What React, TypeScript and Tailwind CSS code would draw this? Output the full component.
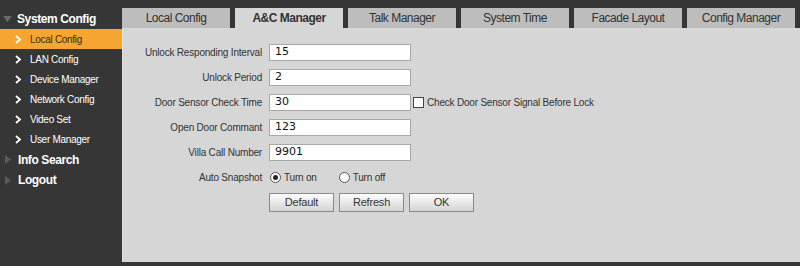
const tabs = ['Local Config', 'A&C Manager', 'Talk Manager', 'System Time', 'Facade Layout', 'Config Manager'];
const subItems = ['Local Config', 'LAN Config', 'Device Manager', 'Network Config', 'Video Set', 'User Manager'];

const fields = [
  { label: 'Unlock Responding Interval', value: '15' },
  { label: 'Unlock Period', value: '2' },
  { label: 'Door Sensor Check Time', value: '30', check: true },
  { label: 'Open Door Commant', value: '123' },
  { label: 'Villa Call Number', value: '9901' },
];

function Chevron() {
  return (
    <svg width="7" height="9" viewBox="0 0 7 9" className="shrink-0">
      <path d="M1 1 L5 4.5 L1 8" stroke="#fff" strokeWidth="1.8" fill="none" />
    </svg>
  );
}

function Triangle({ down }: { down?: boolean }) {
  return (
    <svg width="9" height="9" viewBox="0 0 9 9" className="shrink-0">
      {down ? <path d="M0 2 L9 2 L4.5 8 Z" fill="#6a6a6a" /> : <path d="M2 0 L8 4.5 L2 9 Z" fill="#5a5a5a" />}
    </svg>
  );
}

function Radio({ checked }: { checked?: boolean }) {
  return (
    <span className="w-[11px] h-[11px] rounded-full border border-[#555] bg-white flex items-center justify-center shrink-0">
      {checked && <span className="w-[5px] h-[5px] rounded-full bg-[#222]" />}
    </span>
  );
}

function Btn({ children }: { children: string }) {
  return (
    <button className="w-[65px] h-[19px] border border-[#8a8a8a] bg-gradient-to-b from-[#fdfdfd] to-[#d4d4d4] text-[11px] tracking-[-0.2px] text-[#333] flex items-center justify-center">
      {children}
    </button>
  );
}

export default function App() {
  return (
    <div className="w-[800px] h-[266px] bg-[#363636] flex overflow-hidden" style={{ fontFamily: '"Liberation Sans", Arial, sans-serif' }}>
      <div className="w-[122px] shrink-0 flex flex-col text-white">
        <div className="h-[29px] pt-[8px] flex items-center gap-[5px] pl-[3px]">
          <Triangle down />
          <span className="text-[12px] font-bold tracking-[-0.4px]">System Config</span>
        </div>
        {subItems.map((s, i) => (
          <div key={s} className={`h-[20px] flex items-center pl-[15px] gap-[8px] text-[10px] tracking-[-0.3px] ${i === 0 ? 'bg-[#f5a630]' : ''}`}>
            <Chevron />
            <span className={i === 0 ? 'text-[#3a2a10]' : ''}>{s}</span>
          </div>
        ))}
        <div className="h-[21px] flex items-center gap-[6px] pl-[3px]">
          <Triangle />
          <span className="text-[12px] font-bold tracking-[-0.4px]">Info Search</span>
        </div>
        <div className="h-[20px] flex items-center gap-[6px] pl-[3px]">
          <Triangle />
          <span className="text-[12px] font-bold tracking-[-0.4px]">Logout</span>
        </div>
      </div>
      <div className="flex-1 flex flex-col">
        <div className="h-[28px] pt-[8px] flex gap-[5px]">
          {tabs.map((t, i) => (
            <div key={t} className={`w-[108px] shrink-0 h-[20px] flex items-center justify-center text-[12px] tracking-[-0.5px] text-[#333] ${i === 1 ? 'bg-[#d6d6d6] font-bold' : 'bg-[#bdbdbd]'}`}>
              {t}
            </div>
          ))}
        </div>
        <div className="h-[234px] bg-[#d6d6d6] border-l border-[#e2e2e2] pt-[16px] flex flex-col gap-[8px] text-[10px] tracking-[-0.2px] text-[#333]">
          {fields.map((f) => (
            <div key={f.label} className="h-[17px] flex items-center">
              <span className="w-[139px] text-right">{f.label}</span>
              <div className="ml-[7px] w-[142px] h-[17px] bg-white border border-[#a8a8a8] flex items-center pl-[5px] text-[11px] tracking-normal text-[#111]" style={{ fontFamily: '"DejaVu Sans", Verdana, sans-serif' }}>
                {f.value}
              </div>
              {f.check && (
                <div className="flex items-center ml-[2px] gap-[3px]">
                  <span className="w-[11px] h-[11px] border border-[#444] bg-white" />
                  <span>Check Door Sensor Signal Before Lock</span>
                </div>
              )}
            </div>
          ))}
          <div className="h-[17px] flex items-center">
            <span className="w-[139px] text-right">Auto Snapshot</span>
            <div className="ml-[8px] flex items-center gap-[3px]">
              <Radio checked />
              <span>Turn on</span>
            </div>
            <div className="ml-[22px] flex items-center gap-[3px]">
              <Radio />
              <span>Turn off</span>
            </div>
          </div>
          <div className="flex gap-[5px] ml-[146px] mt-[-1px]">
            <Btn>Default</Btn>
            <Btn>Refresh</Btn>
            <Btn>OK</Btn>
          </div>
        </div>
      </div>
    </div>
  );
}
